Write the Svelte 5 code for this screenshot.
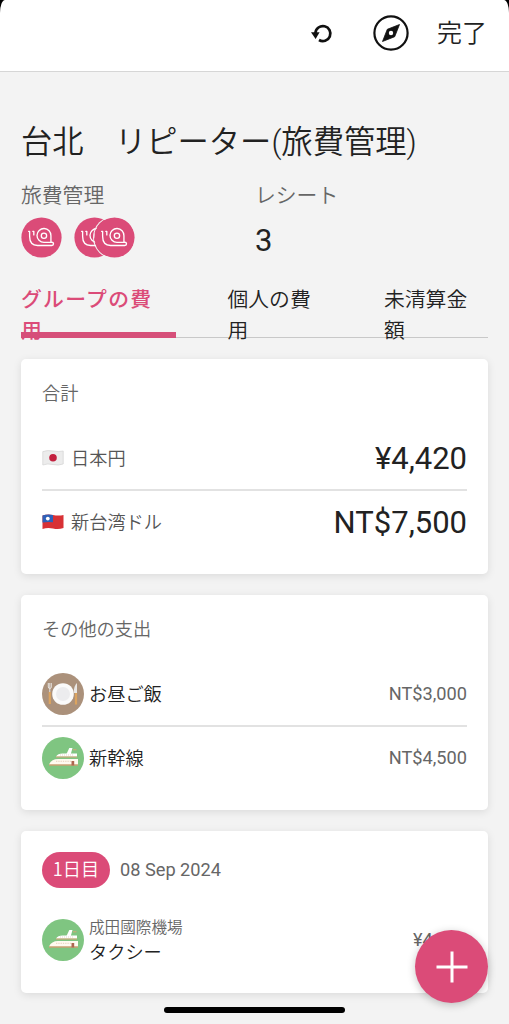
<script lang="ts">
	const tabs = ['グループの費用', '個人の費用', '未清算金額'];
	let active = $state(0);

	const totals = [
		{ flag: 'jp', name: '日本円', amount: '¥4,420' },
		{ flag: 'tw', name: '新台湾ドル', amount: 'NT$7,500' }
	];

	const others = [
		{ icon: 'meal', name: 'お昼ご飯', amount: 'NT$3,000' },
		{ icon: 'train', name: '新幹線', amount: 'NT$4,500' }
	];
</script>

{#snippet snail()}
	<svg class="avatar" viewBox="0 0 40 40">
		<circle cx="20" cy="20" r="19.6" fill="#db4b78" />
		<g fill="none" stroke="#fff" stroke-width="1.3" stroke-linecap="round" stroke-linejoin="round">
			<path d="M7.4 14h1v4.800c0 5.800 2.800 9 7.800 9h13.800c2.300 0 2.300-3.200 0-3.200h-.8V18.300a6.800 6.800 0 1 0-6.800 6.500h6.800" />
			<path d="M11.500 14h1v3.500" />
			<circle cx="22.400" cy="18.300" r="2.600" />
		</g>
	</svg>
{/snippet}

{#snippet flag(code: string)}
	<svg class="flag" viewBox="0 0 22 16">
		{#if code === 'jp'}
			<path d="M.8 1.600Q5.500-.2 11 1t10.200 0V14Q16.500 15.800 11 14.500T.8 15Z" fill="#ececec" stroke="#d2d2d2" stroke-width=".7" />
			<circle cx="11" cy="7.700" r="3.800" fill="#c3213f" />
		{:else}
			<path d="M.5 1.600Q5.500-.2 11 1t10.500 0V14Q16.500 15.800 11 14.500T.5 15Z" fill="#d83135" />
			<path d="M.5 1.600Q5.500-.2 11 1V8.200Q5.500 7.400.5 8.600Z" fill="#2e60b8" />
			<circle cx="5.800" cy="4.600" r="1.900" fill="#fff" />
		{/if}
	</svg>
{/snippet}

{#snippet category(kind: string)}
	<svg class="category" viewBox="0 0 42 42">
		{#if kind === 'meal'}
			<circle cx="21" cy="21" r="21" fill="#ab917b" />
			<circle cx="21" cy="21" r="10.800" fill="#fafafa" />
			<circle cx="21" cy="21" r="7" fill="#ececee" />
			<path d="M6.300 10v4q0 1.500 1.500 1.500T9.300 14v-4M7.800 10v9" fill="none" stroke="#e6e3e0" stroke-width="1" />
			<path d="M7.800 19v12" stroke="#dca45f" stroke-width="2.200" />
			<path d="M35 10q-3.400 3-3.200 10H35Z" fill="#e9e7e5" />
			<path d="M34 20v11.500" stroke="#dca45f" stroke-width="2.200" />
		{:else}
			<circle cx="21" cy="21" r="21" fill="#7fc581" />
			<path d="m24.500 17 2.800-6h3.200l-2 7Z" fill="#fff" />
			<path d="M14 19.600q1.800-3.200 6.500-3.200H35v3.200Z" fill="#fff" />
			<path d="M31 12.800h3.500M14 20h21" stroke="#ef9c78" stroke-width=".8" />
			<path d="M18 18h14" stroke="#d8c5b8" stroke-width=".7" stroke-dasharray="1 1" />
			<path d="M7 27.500q2.500-5.500 9-5.500h20v5.500Z" fill="#fffaf0" />
			<path d="M7 28h29" stroke="#ef8e6c" stroke-width="1" />
			<path d="M14 24.300h15" stroke="#e5ccb7" stroke-width=".9" stroke-dasharray="1.300 1" />
			<path d="M29.500 24h2.700v4.500h-2.700Z" fill="#ad6650" />
		{/if}
	</svg>
{/snippet}

<div class="screen">
	<div class="status">
		<header>
			<button class="undo" aria-label="undo">
				<svg width="23" height="22" viewBox="0 0 23 22">
					<path d="M5.400 11A7.500 7.500 0 1 1 9 18" fill="none" stroke="#111" stroke-width="2.700" />
					<path d="M1 10.300h8.600L5.600 17Z" fill="#111" />
				</svg>
			</button>
			<button class="compass" aria-label="compass">
				<svg width="36" height="36" viewBox="0 0 36 36">
					<circle cx="18" cy="18" r="16.600" fill="none" stroke="#111" stroke-width="2.200" />
					<path d="m26.500 9.500-4.800 12.200L9.500 26.500l4.800-12.200Z" fill="#111" stroke="#111" stroke-width=".8" stroke-linejoin="round" />
					<circle cx="18" cy="18" r="2.200" fill="#fff" />
				</svg>
			</button>
			<button class="done">完了</button>
		</header>
	</div>

	<main>
		<h1>台北　リピーター(旅費管理)</h1>

		<div class="summary">
			<div>
				<div class="label">旅費管理</div>
				<div class="avatars">
					{@render snail()}
					<span class="stack">{@render snail()}{@render snail()}</span>
				</div>
			</div>
			<div>
				<div class="label">レシート</div>
				<div class="count">3</div>
			</div>
		</div>

		<nav>
			{#each tabs as tab, i}
				<button class:active={active === i} onclick={() => (active = i)}>{tab}</button>
			{/each}
		</nav>

		<section>
			<h2>合計</h2>
			{#each totals as total}
				<div class="row">
					{@render flag(total.flag)}
					<span class="currency">{total.name}</span>
					<span class="total">{total.amount}</span>
				</div>
			{/each}
		</section>

		<section>
			<h2>その他の支出</h2>
			{#each others as item}
				<div class="row">
					{@render category(item.icon)}
					<span class="name">{item.name}</span>
					<span class="amount">{item.amount}</span>
				</div>
			{/each}
		</section>

		<section>
			<div class="day">
				<span class="pill">1日目</span>
				<span class="date">08 Sep 2024</span>
			</div>
			<div class="row">
				{@render category('train')}
				<span class="name">
					<small>成田國際機場</small>
					タクシー
				</span>
				<span class="amount">¥4,420</span>
			</div>
		</section>
	</main>

	<button class="fab" aria-label="add">
		<svg width="32" height="32" viewBox="0 0 32 32">
			<path d="M16 .5v31M.5 16h31" stroke="#fff" stroke-width="3" />
		</svg>
	</button>
	<div class="home"></div>
</div>

<style>
	:global(body) {
		background: #f3f3f3;
	}

	.screen {
		position: relative;
		height: 1024px;
		overflow: hidden;
		background: #f3f3f3;
		color: #222;
		font-family: Roboto, 'Noto Sans CJK JP', sans-serif;
		font-size: 18.2px;
	}

	button {
		padding: 0;
		border: 0;
		background: none;
		color: inherit;
		font: inherit;
	}

	svg {
		display: block;
		flex: none;
	}

	.status {
		background: #000;
	}

	header {
		display: flex;
		align-items: center;
		justify-content: flex-end;
		box-sizing: border-box;
		height: 72px;
		padding: 0 22px 6px 0;
		border-bottom: 1px solid #d6d6d6;
		border-radius: 5px 5px 0 0 / 13px 13px 0 0;
		background: #fff;
	}

	.undo {
		margin-right: 40px;
	}

	.compass {
		margin-right: 28px;
	}

	.done {
		padding-top: 3px;
		font-size: 25px;
		font-weight: 350;
		line-height: 36px;
	}

	main {
		padding: 0 21px;
	}

	h1 {
		margin: 0;
		padding-top: 48px;
		font-size: 31.3px;
		font-weight: 350;
		line-height: 46px;
		white-space: nowrap;
	}

	.summary {
		display: grid;
		grid-template-columns: 234px 1fr;
		box-sizing: border-box;
		height: 118px;
		padding-top: 14px;
	}

	.label {
		color: #666;
		font-size: 20.8px;
		font-weight: 350;
		line-height: 32px;
	}

	.avatars {
		display: flex;
		gap: 12px;
		padding-top: 5px;
	}

	.avatar {
		width: 41px;
		height: 41px;
	}

	.stack {
		display: flex;
	}

	.stack .avatar + .avatar {
		margin-left: -21px;
		border-radius: 50%;
		box-shadow: 0 0 0 1px #f3f3f3;
	}

	.count {
		padding-top: 8px;
		font-size: 31px;
		line-height: 42px;
	}

	nav {
		display: grid;
		grid-template-columns: 155px 135px 104px;
		column-gap: 36.5px;
		box-sizing: border-box;
		height: 54px;
		margin-bottom: 21px;
		border-bottom: 1px solid #c8c8c8;
	}

	nav button {
		position: relative;
		height: 54px;
		padding: 1px 16px 0 0;
		font-size: 20.8px;
		font-weight: 350;
		line-height: 31px;
		text-align: left;
	}

	nav button:nth-child(2) {
		margin-left: 15px;
		padding-right: 28px;
	}

	nav .active {
		color: #db4b78;
		font-weight: 500;
		letter-spacing: 1.3px;
	}

	nav .active::after {
		content: '';
		position: absolute;
		left: 0;
		right: 0;
		bottom: 0;
		height: 6px;
		background: #d64f79;
	}

	section {
		margin-bottom: 21px;
		padding: 21px;
		border-radius: 5px;
		background: #fff;
		box-shadow: 0 2px 9px rgba(0, 0, 0, 0.1);
	}

	h2 {
		margin: 0 0 20px;
		padding-top: 1px;
		color: #666;
		font-size: 18.2px;
		font-weight: 350;
		line-height: 25px;
	}

	.row {
		display: flex;
		align-items: center;
		box-sizing: border-box;
		height: 63px;
	}

	.row:last-child {
		margin-bottom: 1px;
	}

	.row + .row {
		border-top: 2px solid #e2e2e2;
	}

	.flag {
		width: 22px;
		height: 16px;
		margin-right: 7px;
	}

	.category {
		width: 42px;
		height: 42px;
		margin-right: 5px;
	}

	.currency {
		margin-top: -2px;
		color: #555;
		font-weight: 350;
	}

	.total {
		margin-left: auto;
		padding-top: 1px;
		font-size: 31px;
	}

	.amount {
		margin-left: auto;
		color: #666;
	}

	.name {
		padding-top: 1px;
		font-weight: 350;
		line-height: 25px;
	}

	small {
		display: block;
		color: #666;
		font-size: 15.6px;
		line-height: 24px;
	}

	.day {
		display: flex;
		align-items: center;
		height: 36px;
		margin-bottom: 20px;
	}

	.pill {
		height: 36px;
		width: 68px;
		margin-right: 10px;
		border-radius: 18px;
		background: #db4b78;
		color: #fff;
		font-family: 'Noto Sans CJK JP', sans-serif;
		font-weight: 350;
		line-height: 33px;
		text-align: center;
	}

	.date {
		margin-top: -2px;
		color: #666;
	}

	.fab {
		position: absolute;
		left: 415px;
		top: 930px;
		display: flex;
		align-items: center;
		justify-content: center;
		width: 73px;
		height: 73px;
		border-radius: 50%;
		background: #db4b78;
		box-shadow: 0 2px 9px rgba(0, 0, 0, 0.22);
	}

	.home {
		position: absolute;
		left: 164px;
		top: 1007px;
		width: 181px;
		height: 6px;
		border-radius: 3px;
		background: #000;
	}
</style>
